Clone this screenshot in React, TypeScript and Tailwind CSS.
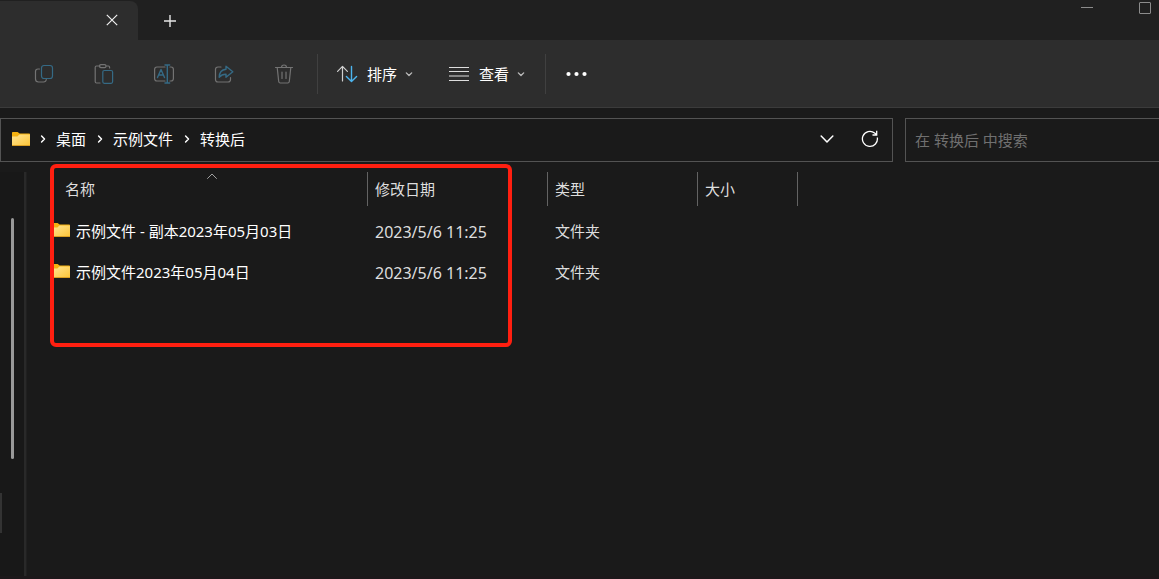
import type { ReactNode } from "react";

const FILES = [
  { name: "示例文件 - 副本2023年05月03日", date: "2023/5/6 11:25", type: "文件夹" },
  { name: "示例文件2023年05月04日", date: "2023/5/6 11:25", type: "文件夹" },
];

const PATH = ["桌面", "示例文件", "转换后"];

function FolderIcon({ className }: { className: string }) {
  return (
    <svg width="18" height="14" viewBox="0 0 18 14" className={className}>
      <defs>
        <linearGradient id="folder" x1="0" y1="0" x2="1" y2="1">
          <stop offset="0" stopColor="#ffe594" />
          <stop offset="1" stopColor="#fcc436" />
        </linearGradient>
      </defs>
      <path d="M0 .8Q0 0 .8 0H5.6L7.6 1.6H17.2Q18 1.6 18 2.4V8H0Z" fill="#f5b211" />
      <path d="M0 4.4H5.4L7.4 2.6H18V13.2Q18 14 17.2 14H.8Q0 14 0 13.2Z" fill="url(#folder)" />
      <path d="M0 13.5H18" stroke="#d99e21" />
    </svg>
  );
}

function Chevron({ d, size, width = 1.4 }: { d: string; size: number; width?: number }) {
  return (
    <svg width={size} height={size} viewBox="0 0 12 12" fill="none" stroke="currentColor" strokeWidth={width} className="shrink-0">
      <path d={d} strokeLinecap="round" strokeLinejoin="round" />
    </svg>
  );
}

function ToolButton({ label, children }: { label: string; children: ReactNode }) {
  return (
    <button aria-label={label} disabled className="flex h-10 w-[60px] items-center justify-center">
      <svg width="20" height="20" viewBox="0 0 20 20" fill="none" stroke="#737373" strokeWidth="1.2" strokeLinecap="round" strokeLinejoin="round">
        {children}
      </svg>
    </button>
  );
}

function TitleBar() {
  return (
    <div className="flex h-10 items-end bg-[#202020]">
      <div className="flex h-[39px] w-[138px] items-center justify-end rounded-tr-lg bg-[#2d2d2d] pr-5 pb-px">
        <button aria-label="关闭标签页" className="text-[#f0f0f0]">
          <svg width="12" height="12" viewBox="0 0 12 12" fill="none" stroke="currentColor" strokeWidth="1.2" className="block">
            <path d="M.8.8 11.2 11.2M11.2.8.8 11.2" />
          </svg>
        </button>
      </div>
      <button aria-label="新建标签页" className="flex h-[39px] w-16 items-center justify-center text-[#e6e6e6]">
        <svg width="14" height="14" viewBox="0 0 14 14" stroke="currentColor" strokeWidth="1.4">
          <path d="M1 7H13M7 1V13" />
        </svg>
      </button>
      <div className="ml-auto flex h-10 items-start text-[#8c8c8c]">
        <button aria-label="最小化" className="flex w-[58px] justify-center pt-[2px]">
          <svg width="12" height="12" viewBox="0 0 12 12" stroke="currentColor">
            <path d="M0 5.5H12" />
          </svg>
        </button>
        <button aria-label="最大化" className="flex w-[43px] justify-end pt-[2px] pr-2">
          <svg width="12" height="12" viewBox="0 0 12 12" fill="none" stroke="currentColor">
            <rect x=".5" y=".5" width="11" height="11" rx=".5" />
          </svg>
        </button>
      </div>
    </div>
  );
}

function Toolbar() {
  return (
    <div className="flex h-17 items-center border-b border-[#3b3b3b] bg-[#2d2d2d] pl-[14px] text-[15px] text-white">
      <ToolButton label="复制">
        <path d="M5.5 5H4Q1.5 5 1.5 7.5V15Q1.5 18 4.5 18H9.5Q12 18 12.3 15.5" />
        <rect x="7.5" y="1.5" width="11" height="13" rx="2.5" stroke="#356a85" />
      </ToolButton>
      <ToolButton label="粘贴">
        <path d="M6 2H2.5Q1.2 2 1.2 3.5V17.5Q1.2 19 2.5 19H6M12.5 2H14.5Q15.6 2 15.6 3.5V4" />
        <rect x="5.5" y=".6" width="6.5" height="3" rx="1.3" />
        <rect x="8.8" y="6.5" width="9.8" height="12.8" rx="1.5" stroke="#356a85" />
      </ToolButton>
      <ToolButton label="重命名">
        <path d="M11 3H3Q.6 3 .6 5.5V14.5Q.6 17 3 17H11M16 3H17Q19.4 3 19.4 5.5V14.5Q19.4 17 17 17H16" />
        <path d="M13.3 1V19M11 1H15.7M11 19H15.7M3.5 13.5 7 5.5 10.5 13.5M4.7 11H9.3" stroke="#356a85" strokeWidth="1.4" />
      </ToolButton>
      <ToolButton label="共享">
        <path d="M7 3H4Q1.5 3 1.5 5.5V15.5Q1.5 18 4 18H14Q16.5 18 16.5 15.5V13.5" />
        <path d="M12 2.2 18.8 7.8 12 13.2V10.2Q8 10 5.2 13.2Q5.4 6 12 5.3Z" stroke="#356a85" strokeWidth="1.4" />
      </ToolButton>
      <ToolButton label="删除">
        <path d="M1.5 3.5H18.5M7.5 3.5Q7.5 1 10 1Q12.5 1 12.5 3.5M3.2 3.5 4.7 17.5Q4.9 19 6.3 19H13.7Q15.1 19 15.3 17.5L16.8 3.5M8 8V14.5M12 8V14.5" />
      </ToolButton>
      <div className="ml-[3px] h-10 w-px bg-[#404040]" />
      <button className="ml-[19px] flex h-10 items-center">
        <svg width="22" height="18" viewBox="0 0 22 18" fill="none" strokeWidth="1.2" strokeLinecap="round" strokeLinejoin="round">
          <path d="M5.5 16V1.5M.6 6.3 5.5 1.4 10.4 6.3" stroke="#d0d0d0" />
          <path d="M14.5 1.5V16.3M9.4 11.5 14.5 16.5 19.6 11.5" stroke="#4cb4ee" strokeWidth="1.4" />
        </svg>
        <span className="mr-1 ml-2 pt-px">排序</span>
        <span className="px-1 text-[#bdbdbd]">
          <Chevron d="M2 4.3 6 8.3 10 4.3" size={8} width={2} />
        </span>
      </button>
      <button className="ml-8 flex h-10 items-center">
        <svg width="20" height="14" viewBox="0 0 20 14" stroke="#dedede">
          <path d="M0 .5H20M0 4.5H20M0 9H20M0 13.5H20" />
        </svg>
        <span className="mr-1 ml-[10px] pt-px">查看</span>
        <span className="px-1 text-[#bdbdbd]">
          <Chevron d="M2 4.3 6 8.3 10 4.3" size={8} width={2} />
        </span>
      </button>
      <div className="ml-4 h-10 w-px bg-[#404040]" />
      <button aria-label="查看更多" className="ml-5 flex h-10 items-center">
        <svg width="22" height="6" viewBox="0 0 22 6" fill="currentColor">
          <circle cx="2.5" cy="3" r="2.1" />
          <circle cx="10.5" cy="3" r="2.1" />
          <circle cx="18.5" cy="3" r="2.1" />
        </svg>
      </button>
    </div>
  );
}

function AddressRow() {
  return (
    <div className="flex gap-3 pt-[10px] text-[15px]">
      <nav aria-label="路径" className="flex h-11 flex-1 items-center border border-[#535353] pb-[2px] pl-[11px] text-white">
        <FolderIcon className="mr-2" />
        {PATH.map((part) => (
          <div key={part} className="flex items-center">
            <Chevron d="M4.3 2.5 7.8 6 4.3 9.5" size={10} width={1.8} />
            <a href="#" className="mr-[9px] ml-2">
              {part}
            </a>
          </div>
        ))}
        <button aria-label="以前的位置" className="mr-[27px] ml-auto">
          <Chevron d="M1 3.5 6 8.5 11 3.5" size={14} width={1.3} />
        </button>
        <button aria-label="刷新" className="mr-[13px]">
          <svg width="18" height="18" viewBox="0 0 18 18" fill="none" stroke="currentColor" strokeWidth="1.3" className="block">
            <path d="M16.3 7.5A7.5 7.5 0 1 1 13.6 3L15.5 4.6M15.7.8V5H11.5" />
          </svg>
        </button>
      </nav>
      <input
        type="search"
        aria-label="搜索"
        placeholder="在 转换后 中搜索"
        className="h-11 w-[254px] rounded-none border border-r-0 border-[#535353] bg-transparent pl-[9px] text-white outline-none placeholder:text-[#707070]"
      />
    </div>
  );
}

function HeaderCell({ children, className = "" }: { children: ReactNode; className?: string }) {
  return (
    <th className="relative p-0 align-top font-normal">
      <button className={`flex h-[34px] w-full items-center border-r border-[#636363] ${className}`}>{children}</button>
    </th>
  );
}

function FileTable() {
  return (
    <table className="w-full table-fixed text-left text-[15px] text-[#dedede]">
      <colgroup>
        <col className="w-[318px]" />
        <col className="w-[180px]" />
        <col className="w-[150px]" />
        <col className="w-[100px]" />
        <col />
      </colgroup>
      <thead>
        <tr className="h-[39px]">
          <HeaderCell className="pl-[15px]">
            名称
            <span className="absolute inset-x-0 top-0 flex justify-center pl-[6px] text-[#a0a0a0]">
              <Chevron d="M1.5 6.5 6 2 10.5 6.5" size={12} width={1} />
            </span>
          </HeaderCell>
          <HeaderCell className="pl-[7px]">修改日期</HeaderCell>
          <HeaderCell className="pl-[7px]">类型</HeaderCell>
          <HeaderCell className="pl-[7px]">大小</HeaderCell>
          <td />
        </tr>
      </thead>
      <tbody>
        {FILES.map((file) => (
          <tr key={file.name} className="h-[41px]">
            <td className="p-0 pl-[2px] text-white">
              <div className="flex items-center gap-[6px]">
                <FolderIcon className="mb-[3px] shrink-0" />
                {file.name}
              </div>
            </td>
            <td className="p-0 pl-[7px] text-base">{file.date}</td>
            <td className="p-0 pl-[7px]">{file.type}</td>
            <td />
            <td />
          </tr>
        ))}
      </tbody>
    </table>
  );
}

export default function App() {
  return (
    <div className="flex min-h-screen flex-col overflow-hidden bg-[#1a1a1a] font-['Noto_Sans','Noto_Sans_CJK_SC',sans-serif]">
      <TitleBar />
      <Toolbar />
      <AddressRow />
      <div className="flex flex-1 pt-[10px]">
        {/* Navigation pane, mostly collapsed */}
        <aside className="flex w-[27px] border-r border-[#202020] bg-[#181818]">
          <div className="mt-[321px] h-10 w-[2px] bg-[#333333]" />
          <div className="mt-[46px] ml-[9px] h-[241px] w-[3px] rounded-full bg-[#999999]" />
          <div className="ml-auto w-[2px] bg-[#292929]" />
        </aside>
        <main className="relative flex-1 pl-[23px]">
          <FileTable />
          {/* Highlight around the name and date columns */}
          <div className="pointer-events-none absolute -top-2 left-[23px] h-[183px] w-[462px] rounded-md border-4 border-[#ff1f10]" />
        </main>
      </div>
      <div className="h-[3px] bg-[#1c181a]" />
    </div>
  );
}
